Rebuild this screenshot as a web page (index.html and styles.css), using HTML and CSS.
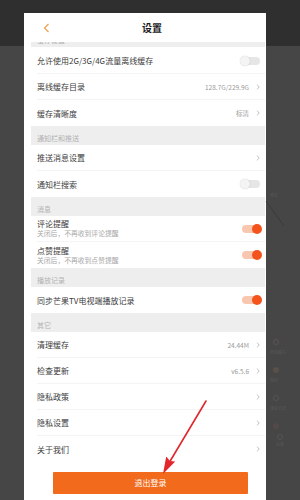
FILE: index.html
```html
<!DOCTYPE html>
<html lang="zh">
<head>
<meta charset="utf-8">
<title>设置</title>
<link rel="stylesheet" href="styles.css">
</head>
<body>
<div class="backdrop">
  <div class="bd-top"></div>
  <div class="bd-main">
    <div class="bd-side">
      <span class="bd-text t1">推荐</span>
      <span class="bd-icon i1"></span>
      <span class="bd-text t2">离线缓存</span>
      <span class="bd-icon i2"></span>
      <span class="bd-text t3">我的</span>
      <span class="bd-icon i3"></span>
      <span class="bd-text t4">播放记录</span>
      <span class="bd-icon i4"></span>
      <span class="bd-icon i5"></span>
      <span class="bd-text t5">设置</span>
    </div>
  </div>
</div>

<div class="panel">
  <div class="header">
    <svg class="back" width="7" height="10" viewBox="0 0 7 10"><polyline points="5.5,1 1.5,5 5.5,9" fill="none" stroke="#efa04e" stroke-width="1.2"/></svg>
    <div class="title">设置</div>
  </div>

  <div class="list">
    <div class="cut"><div class="section first">缓存设置</div></div>

    <div class="row"><span class="label">允许使用2G/3G/4G流量离线缓存</span><span class="toggle off"><span class="track"></span><span class="knob"></span></span></div>
    <div class="row"><span class="label">离线缓存目录</span><span class="value">128.7G/229.9G</span><svg class="chev" width="4" height="6" viewBox="0 0 4 6"><polyline points="1,0.6 3.2,3 1,5.4" fill="none" stroke="#bbbbbb" stroke-width="0.9"/></svg></div>
    <div class="row"><span class="label">缓存清晰度</span><span class="value">标清</span><svg class="chev" width="4" height="6" viewBox="0 0 4 6"><polyline points="1,0.6 3.2,3 1,5.4" fill="none" stroke="#bbbbbb" stroke-width="0.9"/></svg></div>

    <div class="section">通知栏和推送</div>
    <div class="row"><span class="label">推送消息设置</span><svg class="chev" width="4" height="6" viewBox="0 0 4 6"><polyline points="1,0.6 3.2,3 1,5.4" fill="none" stroke="#bbbbbb" stroke-width="0.9"/></svg></div>
    <div class="row"><span class="label">通知栏搜索</span><span class="toggle off"><span class="track"></span><span class="knob"></span></span></div>

    <div class="section">消息</div>
    <div class="row double"><span class="texts"><span class="label">评论提醒</span><span class="sub">关闭后，不再收到评论提醒</span></span><span class="toggle on"><span class="track"></span><span class="knob"></span></span></div>
    <div class="row double"><span class="texts"><span class="label">点赞提醒</span><span class="sub">关闭后，不再收到点赞提醒</span></span><span class="toggle on"><span class="track"></span><span class="knob"></span></span></div>

    <div class="section">播放记录</div>
    <div class="row"><span class="label">同步芒果TV电视端播放记录</span><span class="toggle on"><span class="track"></span><span class="knob"></span></span></div>

    <div class="section">其它</div>
    <div class="row"><span class="label">清理缓存</span><span class="value">24.44M</span><svg class="chev" width="4" height="6" viewBox="0 0 4 6"><polyline points="1,0.6 3.2,3 1,5.4" fill="none" stroke="#bbbbbb" stroke-width="0.9"/></svg></div>
    <div class="row"><span class="label">检查更新</span><span class="value">v6.5.6</span><svg class="chev" width="4" height="6" viewBox="0 0 4 6"><polyline points="1,0.6 3.2,3 1,5.4" fill="none" stroke="#bbbbbb" stroke-width="0.9"/></svg></div>
    <div class="row"><span class="label">隐私政策</span><svg class="chev" width="4" height="6" viewBox="0 0 4 6"><polyline points="1,0.6 3.2,3 1,5.4" fill="none" stroke="#bbbbbb" stroke-width="0.9"/></svg></div>
    <div class="row"><span class="label">隐私设置</span><svg class="chev" width="4" height="6" viewBox="0 0 4 6"><polyline points="1,0.6 3.2,3 1,5.4" fill="none" stroke="#bbbbbb" stroke-width="0.9"/></svg></div>
    <div class="row last"><span class="label">关于我们</span><svg class="chev" width="4" height="6" viewBox="0 0 4 6"><polyline points="1,0.6 3.2,3 1,5.4" fill="none" stroke="#bbbbbb" stroke-width="0.9"/></svg></div>
  </div>

  <div class="logout">退出登录</div>
</div>

<svg class="annot" width="300" height="500" viewBox="0 0 300 500">
  <line x1="266" y1="201" x2="284" y2="226" stroke="#3a3a3a" stroke-width="1"/>
  <line x1="206" y1="401" x2="169" y2="463" stroke="#e3262b" stroke-width="1.6" stroke-linecap="round"/>
  <polygon points="163,474 166.2,456.5 170,461 175.2,461.6" fill="#e3262b"/>
</svg>
</body>
</html>
```

FILE: styles.css
```css
* { box-sizing: border-box; }

html, body {
  margin: 0;
  padding: 0;
}

body {
  width: 300px;
  height: 500px;
  overflow: hidden;
  position: relative;
  font-family: "Noto Sans CJK SC", "Noto Sans", sans-serif;
  background: #464646;
}

/* ---------- backdrop (dimmed app behind the sheet) ---------- */
.backdrop {
  height: 500px;
  display: flex;
  flex-direction: column;
}

.bd-top {
  height: 46px;
  background: #2f2f2f;
}

.bd-main {
  flex: 1;
  background: #464646;
  display: flex;
  justify-content: flex-end;
}

.bd-side {
  width: 32px;
  display: flex;
  flex-direction: column;
  align-items: flex-start;
  padding-left: 2px;
}

.bd-text {
  font-size: 4px;
  line-height: 5px;
  color: #575757;
}

.bd-icon {
  width: 6px;
  height: 6px;
  border-radius: 50%;
  border: 1px solid #555555;
  margin-left: 3px;
}

.t1 { margin-top: 147px; }
.i1 { margin-top: 141px; border-color: #5a5652; }
.t2 { margin-top: 5px; }
.i2 { margin-top: 12px; background: #5a5048; border: none; }
.t3 { margin-top: 5px; }
.i3 { margin-top: 12px; }
.t4 { margin-top: 5px; }
.i4 { margin-top: 12px; background: #544848; border: none; }
.i5 { margin-top: 5px; margin-left: 7px; }
.t5 { margin-top: 2px; margin-left: 6px; }

/* ---------- settings sheet ---------- */
.panel {
  position: absolute;
  left: 24px;
  top: 13px;
  width: 242px;
  height: 487px;
  background: #ffffff;
  overflow: hidden;
}

.header {
  height: 29px;
  display: flex;
  align-items: center;
  padding-left: 19px;
}

.back {
  display: block;
  flex: none;
}

.title {
  margin-left: 92px;
  font-size: 10px;
  font-weight: 700;
  color: #1a1a1a;
  line-height: 12px;
}

.list {
  margin-left: 7px;
  width: 234px;
}

.cut {
  height: 6px;
  overflow: hidden;
}

.section {
  height: 19px;
  background: #eeeeee;
  padding: 7px 0 2px 6px;
  font-size: 7px;
  line-height: 10px;
  color: #b2b2b2;
}

.section.first {
  margin-top: -14px;
}

.row {
  height: 26px;
  margin-left: 6px;
  padding-right: 3px;
  display: flex;
  align-items: center;
  border-bottom: 1px solid #f4f4f4;
}

.row.last,
.row:has(+ .section) {
  border-bottom: none;
}

.label {
  flex: 1;
  font-size: 8px;
  line-height: 11px;
  color: #3c3c3c;
  white-space: nowrap;
}

.texts {
  flex: 1;
  display: flex;
  flex-direction: column;
}

.texts .label {
  line-height: 10px;
}

.sub {
  font-size: 6.8px;
  line-height: 9px;
  color: #a8a8a8;
  white-space: nowrap;
}

.value {
  font-size: 6.5px;
  line-height: 8px;
  color: #9a9a9a;
  margin-right: 7px;
}

.chev {
  display: block;
  margin-right: 2px;
}

/* ---------- switches ---------- */
.toggle {
  width: 22px;
  height: 10px;
  display: grid;
  align-items: center;
}

.track,
.knob {
  grid-area: 1 / 1;
}

.track {
  height: 8px;
  margin: 0 2px;
  border-radius: 4px;
}

.knob {
  width: 10px;
  height: 10px;
  border-radius: 50%;
}

.toggle.off .track { background: #e6e6e6; }
.toggle.off .knob {
  justify-self: start;
  background: #f4f4f4;
  box-shadow: 0 0 1px rgba(0, 0, 0, 0.25);
}

.toggle.on .track { background: #f9c7b0; }
.toggle.on .knob {
  justify-self: end;
  background: #f4541c;
}

/* ---------- logout button ---------- */
.logout {
  margin: 10px 0 0 29px;
  width: 195px;
  height: 22px;
  background: #f26a1c;
  border-radius: 1px;
  color: #ffffff;
  font-size: 8px;
  line-height: 22px;
  text-align: center;
}

/* ---------- annotation overlay ---------- */
.annot {
  position: absolute;
  left: 0;
  top: 0;
  pointer-events: none;
}
```
